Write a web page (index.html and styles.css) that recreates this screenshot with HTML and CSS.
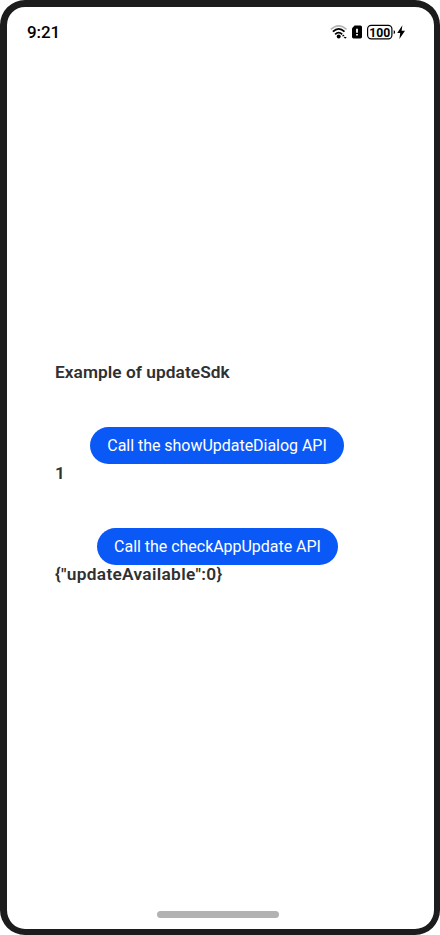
FILE: index.html
```html
<!DOCTYPE html>
<html lang="en">
<head>
<meta charset="utf-8">
<title>updateSdk</title>
<link rel="stylesheet" href="styles.css">
</head>
<body>
<div class="phone">
  <header class="status">
    <span class="time">9:21</span>
    <svg class="icons" width="76" height="18" viewBox="0 0 76 18">
      <g fill="none" stroke-linecap="butt">
        <path d="M0.8 6.4Q8.7 -0.8 16.6 6.4" stroke="#b5b5b5" stroke-width="1.6"/>
        <path d="M2.9 8.7Q8.7 3 14.5 8.7" stroke="#000" stroke-width="1.8"/>
        <path d="M5.2 11.3Q8.7 7.8 12.2 11.3" stroke="#000" stroke-width="1.8"/>
      </g>
      <circle cx="8.7" cy="13.6" r="2"/>
      <path d="M11.8 13.3l1.5-1.9 1.5 1.9zM13.6 13.9h3.2l-1.6 1.9z"/>
      <path d="M24.6 2.6h5.8q1.6 0 1.6 1.6v9.6q0 1.6-1.6 1.6h-6.8q-1.6 0-1.6-1.6V5.3z"/>
      <path d="M27 5.7v4.1M27 11v1.6" stroke="#fff" stroke-width="1.8"/>
      <rect x="37.6" y="2.4" width="24.3" height="13.4" rx="3.6" fill="none" stroke="#000" stroke-width="1.2"/>
      <path d="M63.7 7.2q1.4 0 1.4 1.9t-1.4 1.9z"/>
      <text class="level" x="49.8" y="13.5" text-anchor="middle" textLength="21" lengthAdjust="spacingAndGlyphs">100</text>
      <path d="M72.4 2.2L67.2 9.9h3l-.8 6 5.6-8.1h-3.4z"/>
    </svg>
  </header>
  <main class="content">
    <h1 class="label title">Example of updateSdk</h1>
    <button class="btn show">Call the showUpdateDialog API</button>
    <p class="label one">1</p>
    <button class="btn check">Call the checkAppUpdate API</button>
    <p class="label result">{"updateAvailable":0}</p>
  </main>
  <div class="handle"></div>
</div>
</body>
</html>
```
FILE: styles.css
```css
* { box-sizing: border-box; }
body { margin: 0; background: #fff; font-family: Roboto, "Liberation Sans", sans-serif; }
.phone {
  width: 440px; height: 935px;
  border: 7px solid #1c1c1c; border-right-width: 6px; border-bottom-width: 6px;
  border-radius: 25px;
  background: #fff;
  display: flex; flex-direction: column;
}
.status {
  display: flex; justify-content: space-between; align-items: center;
  height: 48px; padding: 1px 28px 0 20px; flex: none;
}
.time { font-size: 17px; font-weight: 500; color: #000; letter-spacing: -0.1px; line-height: 20px; }
.icons { flex: none; }
.level { font-size: 12.5px; font-weight: 700; }
.content { flex: 1; display: flex; flex-direction: column; padding: 307px 48px 0; }
.label { margin: 0; font-size: 17.3px; line-height: 20px; font-weight: 600; color: #303030; white-space: nowrap; }
.title { letter-spacing: 0.05px; }
.one, .result { margin-top: -1px; }
.result { letter-spacing: 0.3px; }
.btn {
  border: 0; padding: 0; height: 37px; border-radius: 19px;
  background: #0a59f7; color: #fff; font: 400 16px/37px Roboto, sans-serif;
  letter-spacing: -0.03px; white-space: nowrap; flex: none;
}
.show { width: 254px; margin: 45px 0 0 35px; }
.check { width: 241px; margin: 45px 0 0 42px; }
.handle { width: 122px; height: 7px; border-radius: 4px; background: #b2b2b2; margin: 0 0 11px 150px; flex: none; }
```
